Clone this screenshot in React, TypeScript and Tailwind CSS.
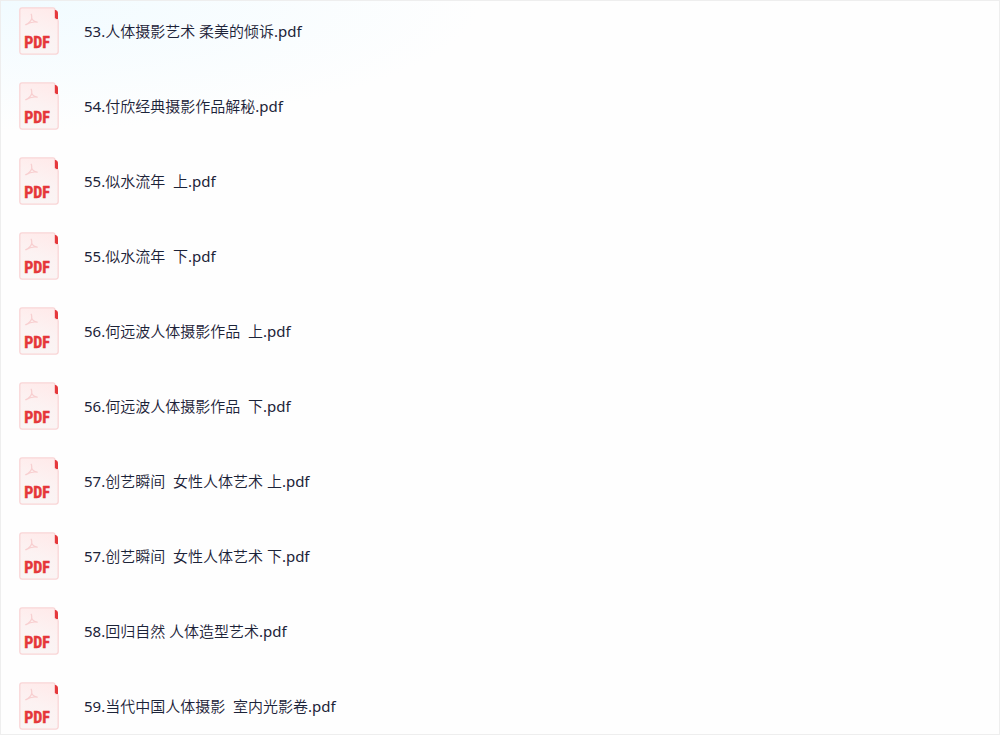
const files: string[] = [
  '53.人体摄影艺术 柔美的倾诉.pdf',
  '54.付欣经典摄影作品解秘.pdf',
  '55.似水流年  上.pdf',
  '55.似水流年  下.pdf',
  '56.何远波人体摄影作品  上.pdf',
  '56.何远波人体摄影作品  下.pdf',
  '57.创艺瞬间  女性人体艺术 上.pdf',
  '57.创艺瞬间  女性人体艺术 下.pdf',
  '58.回归自然 人体造型艺术.pdf',
  '59.当代中国人体摄影  室内光影卷.pdf',
];

function PdfIcon() {
  return (
    <svg viewBox="0 0 40 48" className="h-12 w-10 shrink-0" aria-hidden="true">
      <defs>
        <linearGradient id="sheet" x1="0.7" y1="0" x2="0.4" y2="1">
          <stop offset="0" stopColor="#ffeaea" />
          <stop offset="0.5" stopColor="#fcf2f2" />
          <stop offset="1" stopColor="#faf5f5" />
        </linearGradient>
      </defs>
      <path
        d="M3 .9H34Q35.9 .9 35.9 2.8V10.5Q35.9 12.2 37.6 12.2Q39.2 12.2 39.2 14V44.6Q39.2 47.1 36.7 47.1H3.3Q.8 47.1 .8 44.6V3.2Q.8 .9 3 .9Z"
        fill="url(#sheet)"
        stroke="#f9d5d6"
        strokeWidth="1.3"
      />
      <path d="M35.9 2.8Q39 3.3 39 6.4V11.9H37.4Q35.9 11.7 35.9 10.3Z" fill="#e5373b" />
      <path
        d="M12.2 7.2C13.4 9.8 12.7 13 10.4 15.2C9.3 16.5 8 17.5 6.7 17.7M12.6 8.2C12.2 11.5 14 14.3 18.2 15.2M7 17.7C10 15.7 14 14.6 18.2 15.2"
        fill="none"
        stroke="#f8cfd0"
        strokeWidth="1.2"
        strokeLinecap="round"
        strokeLinejoin="round"
      />
      <text
        x="18"
        y="41"
        textAnchor="middle"
        className="fill-[#e5373b] stroke-[#e5373b] font-['Roboto_Condensed','Roboto',sans-serif] text-[16px] font-bold"
        strokeWidth="0.4"
        strokeLinejoin="round"
      >
        PDF
      </text>
    </svg>
  );
}

export default function App() {
  return (
    <main className="min-h-screen border border-[#eeeeee] bg-[#fefefe] bg-[radial-gradient(ellipse_480px_130px_at_0_0,#f1fbff,#fefefe)] px-[18px] pt-[6px] pb-1 font-['Noto_Sans','Noto_Sans_CJK_SC_DemiLight','Noto_Sans_CJK_SC',sans-serif] text-[15px] leading-6 text-[#1c2338]">
      <ul className="flex flex-col gap-[27px]">
        {files.map((name) => (
          <li key={name} className="flex items-center gap-[25px]">
            <PdfIcon />
            <a href="#" className="min-w-0 whitespace-pre-wrap">
              {name}
            </a>
          </li>
        ))}
      </ul>
    </main>
  );
}
